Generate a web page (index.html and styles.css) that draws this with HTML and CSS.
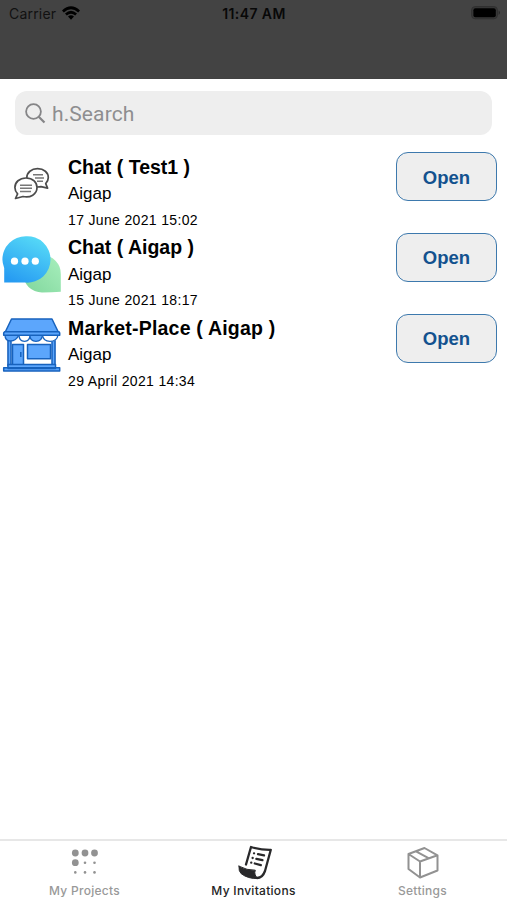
FILE: index.html
```html
<!DOCTYPE html>
<html lang="en">
<head>
<meta charset="utf-8">
<title>My Invitations</title>
<link rel="stylesheet" href="styles.css">
</head>
<body>
<div class="app">
  <header class="header">
    <div class="carrier"><span>Carrier</span>
      <svg width="18" height="14" viewBox="0 0 18 14"><path d="M0 4.5Q9-3.8 18 4.5L16.2 6.5Q9 .2 1.8 6.5ZM3 7.5Q9 2.2 15 7.5L13.2 9.5Q9 6 4.8 9.5ZM6 10.5Q9 8 12 10.5L9 13.7Z" fill="#000"/></svg>
    </div>
    <time class="clock">11:47 AM</time>
    <svg class="battery" width="30" height="14" viewBox="0 0 30 14"><rect x=".6" y=".6" width="25.8" height="12.2" rx="3.5" fill="#383838" stroke="#303030"/><rect x="2.4" y="2.2" width="22.4" height="9" rx="2" fill="#000"/><path d="M27.7 4.5Q30 6.7 27.7 9Z" fill="#242424"/></svg>
  </header>
  <main class="content">
    <label class="search">
      <svg width="21" height="21" viewBox="0 0 21 21" fill="none" stroke="#858587" stroke-width="1.8"><circle cx="8.5" cy="8.5" r="7.4"/><path d="M13.7 13.7L19.5 19.5" stroke-width="2.2"/></svg>
      <span>h.Search</span>
    </label>
    <section class="list">
      <article class="row">
        <svg class="thumb" viewBox="0 0 62 62"><g fill="#fff" stroke="#4c4c4c" stroke-width="1.7" stroke-linejoin="round"><path d="M37.5 15.7C44 15.7 48.3 19.5 48.3 24.5Q48.3 28 45.7 30.7L47.6 35.2L41 33.6C33 35.3 26.8 31 26.8 24.8C26.8 19.5 31.5 15.7 37.5 15.7Z"/><path d="M26 25C33 25 37 29.2 37 34.6C37 41.3 30.3 45.2 23 43.5L15.5 45.5L17.6 40.8Q14.9 38 14.9 34.5C14.9 29.2 19.5 25 26 25Z"/></g><path d="M33 21.7h10M35 25h9M37 28.2h6M20 32.2h12M20 35.3h12M20 38.5h11" stroke="#777" stroke-width="1.4"/></svg>
        <div class="info"><h2 class="t1">Chat ( Test1 )</h2><p>Aigap</p><time>17 June 2021 15:02</time></div>
        <button class="open">Open</button>
      </article>
      <article class="row">
        <svg class="thumb" viewBox="0 0 62 62"><defs><linearGradient id="blue" x1=".8" y1="0" x2=".3" y2="1"><stop stop-color="#58dcf7"/><stop offset="1" stop-color="#279cf2"/></linearGradient><linearGradient id="green" x1="1" y1="0" x2="0" y2="1"><stop stop-color="#a8efbd"/><stop offset="1" stop-color="#80d69c"/></linearGradient></defs><path d="M42 21A19 18.5 0 0 1 60.8 40V57.8Q52 58.4 42 58.4A19 18.7 0 0 1 42 21Z" fill="url(#green)"/><path d="M25.8 2.3A23.2 23.2 0 1 1 25.8 48.6H4.2V34Q2.4 29 2.4 25.5A23.4 23.2 0 0 1 25.8 2.3Z" fill="url(#blue)"/><g fill="#fff"><circle cx="14.5" cy="27.2" r="3.6"/><circle cx="25" cy="27.2" r="3.6"/><circle cx="35.3" cy="27.2" r="3.6"/></g></svg>
        <div class="info"><h2 class="t2">Chat ( Aigap )</h2><p>Aigap</p><time>15 June 2021 18:17</time></div>
        <button class="open">Open</button>
      </article>
      <article class="row">
        <svg class="thumb store" viewBox="0 0 62 62" fill="#5ca6fc" stroke="#1762bd" stroke-width="1.5" stroke-linejoin="round"><path d="M8.5 24V53H54.5V24Z" fill="#fff"/><path d="M8 24h3v29H8zM52 24H55v29h-3z"/><path d="M12.5 31.5h11V53h-11zM27.5 31.5h23v14.2h-23z"/><path d="M20.8 39v5"/><path d="M5.5 22H57.5Q57.5 28.3 52 28.3T46 22Q46 28.3 40 28.3T34.5 22Q34.5 28.3 28.5 28.3T23 22Q23 28.3 17 28.3T11.5 28Q5.5 27 5.5 22Z" fill="#fff" stroke="none"/><path d="M5 22Q5 28 10.5 28T19 22ZM29.5 22Q30 28.3 36 28.3T42.5 22Z" stroke-width="1.3"/><path d="M19 22Q19 28.3 24.5 28.3T30 22ZM42.5 22Q43 28.3 50 28.3T58 22Z" fill="#fff" stroke-width="1.3"/><path d="M11.5 6H52L58.5 19.5H5Z"/><path d="M4.5 18.8H58.5Q59.7 18.8 59.7 20V22.3H3.7V20Z"/><path d="M8 51.5h47.5v4H8zM3.7 54.7h56v3.2h-56z"/></svg>
        <div class="info"><h2 class="t3">Market-Place ( Aigap )</h2><p>Aigap</p><time class="april">29 April 2021 14:34</time></div>
        <button class="open">Open</button>
      </article>
    </section>
  </main>
  <nav class="tabs">
    <a class="tab"><svg width="36" height="36" viewBox="0 0 36 36" fill="#929292"><circle cx="8.3" cy="9" r="3.4"/><circle cx="18" cy="9" r="3.4"/><circle cx="27.5" cy="9" r="3.4"/><circle cx="8.3" cy="18.7" r="3.4"/><circle cx="18" cy="18.7" r="1.3"/><circle cx="27.5" cy="18.7" r="1.3"/><circle cx="8.3" cy="28.4" r="1.3"/><circle cx="18" cy="28.4" r="1.3"/><circle cx="27.5" cy="28.4" r="1.3"/></svg><span class="projects">My Projects</span></a>
    <a class="tab active"><svg width="36" height="36" viewBox="0 0 36 36" fill="none" stroke="#29292b" stroke-width="2.3" stroke-linejoin="round" stroke-linecap="round"><path d="M10 20.5L15 3Q25 6 34.8 5.8L29 27Q26.5 34 21 34"/><path d="M3 22.2Q11 26.5 19.3 26.2Q17.5 31 22 34.5Q12 35 5 29.5Q2.5 27 3 22.2Z" fill="#29292b" stroke-width="1"/><path d="M18 9.3h.1M22 10.2l6 1.2M16.6 14h.1M20.4 14.8l6 1.4M15.2 18.7h.1M18.8 19.5l6 1.6"/></svg><span class="invitations">My Invitations</span></a>
    <a class="tab"><svg width="36" height="36" viewBox="0 0 36 36" fill="none" stroke="#929292" stroke-width="2" stroke-linejoin="round"><path d="M3.5 10L19.5 4L32.5 11.3V26.5L15 33.5L3.5 25ZM3.5 10L15 17.5L32.5 11.3M15 17.5V33.5M11 7.3L24 14.3"/></svg><span class="settings">Settings</span></a>
  </nav>
</div>
</body>
</html>
```

FILE: styles.css
```css
* { box-sizing: border-box; }
body { margin: 0; font-family: "Liberation Sans", Arial, sans-serif; color: #000; background: #fff; }
h2, p { margin: 0; }
.app { width: 507px; height: 900px; display: flex; flex-direction: column; overflow: hidden; }
.header { height: 79px; flex: none; display: grid; grid-template-columns: 1fr auto 1fr; align-items: start; padding: 6px 6px 0 9px; background: #434343; border-bottom: 1px solid #414141; font-family: Inter, sans-serif; font-size: 14px; line-height: 16px; }
.carrier { display: flex; gap: 6px; color: #111; letter-spacing: .2px; }
.clock { color: #080808; font-weight: 600; letter-spacing: .4px; margin-right: 2px; }
.battery { justify-self: end; }
.content { flex: 1; padding-top: 12px; }
.search { display: flex; align-items: center; gap: 6px; height: 44px; margin: 0 15px; padding-left: 10px; border-radius: 12px; background: #eee; color: #8e8e90; font-family: Roboto, sans-serif; font-size: 21px; letter-spacing: .1px; }
.search span { padding-top: 1px; }
.list { padding-top: 15px; }
.row { height: 80.7px; display: grid; grid-template-columns: 68px 1fr 101px; align-items: start; padding-right: 10px; }
.thumb { width: 62px; height: 62px; margin-top: 3px; }
.store { margin-top: 1.5px; }
.info { padding-top: 4.6px; }
h2 { font-size: 19.5px; line-height: 24px; white-space: nowrap; }
.t3 { letter-spacing: .2px; }
.info p { font-size: 17px; line-height: 22px; margin-top: 4.5px; }
.info time { display: block; font-size: 14px; line-height: 18px; margin-top: 5.5px; letter-spacing: .34px; }
.open { width: 101px; height: 49px; margin-top: 2.3px; padding: 2px 0 0; border: 1.5px solid #3d79ad; border-radius: 12px; background: #eee; color: #13528f; font: bold 18.5px "Liberation Sans", sans-serif; }
.tabs { height: 61px; flex: none; display: grid; grid-template-columns: repeat(3, 1fr); border-top: 2px solid #e7e7e7; background: #fff; font-family: Inter, sans-serif; }
.tab { display: flex; flex-direction: column; align-items: center; padding-top: 3px; color: #999; font-size: 12px; font-weight: 500; line-height: 16px; letter-spacing: .28px; }
.tab span { margin-top: 3px; }
.active { color: #242424; }
```
